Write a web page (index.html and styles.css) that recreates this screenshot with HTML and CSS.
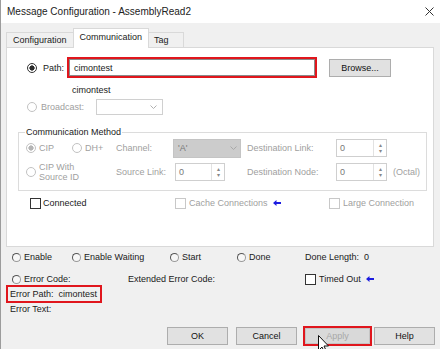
FILE: index.html
```html
<!DOCTYPE html>
<html>
<head>
  <title>Message Configuration - AssemblyRead2</title>
  <link rel="stylesheet" href="styles.css">
</head>
<body>
  <div class="dialog">
    <div class="titlebar">
      <span class="title">Message Configuration - AssemblyRead2</span>
      <svg class="close" width="9" height="9" viewBox="0 0 9 9"><path d="M0.5 0.5 L8.5 8.5 M8.5 0.5 L0.5 8.5" stroke="#333" stroke-width="1"/></svg>
    </div>

    <div class="tabs">
      <div class="tab">Configuration</div>
      <div class="tab active">Communication</div>
      <div class="tab">Tag</div>
    </div>

    <div class="panel">
      <div class="path-row">
        <span class="radio checked"></span>
        <label class="path-label">Path:</label>
        <div class="mark path-mark">
          <div class="textbox">cimontest</div>
        </div>
        <button class="btn browse">Browse...</button>
      </div>
      <div class="path-echo">cimontest</div>
      <div class="broadcast-row">
        <span class="radio off"></span>
        <label class="muted bc-label">Broadcast:</label>
        <div class="select">
          <svg class="chev" width="7" height="4" viewBox="0 0 7 4"><path d="M0.5 0.5 L3.5 3.5 L6.5 0.5" fill="none" stroke="#b0b0b0"/></svg>
        </div>
      </div>

      <fieldset class="group">
        <legend>Communication Method</legend>
        <div class="method-grid">
          <div class="choices">
            <span class="choice first"><span class="radio off picked"></span><span class="muted">CIP</span></span>
            <span class="choice"><span class="radio off"></span><span class="muted">DH+</span></span>
          </div>
          <div class="muted">Channel:</div>
          <div class="combo">
            <span>'A'</span>
            <svg class="chev" width="7" height="4" viewBox="0 0 7 4"><path d="M0.5 0.5 L3.5 3.5 L6.5 0.5" fill="none" stroke="#a8a8a8"/></svg>
          </div>
          <div class="muted lab2">Destination Link:</div>
          <div class="spin"><span class="val">0</span><span class="arrows">&#9652;<br>&#9662;</span></div>
          <div></div>

          <div class="choices">
            <span class="choice"><span class="radio off"></span><span class="muted two-line">CIP With<br>Source ID</span></span>
          </div>
          <div class="muted">Source Link:</div>
          <div class="spin short"><span class="val">0</span><span class="arrows">&#9652;<br>&#9662;</span></div>
          <div class="muted lab2">Destination Node:</div>
          <div class="spin"><span class="val">0</span><span class="arrows">&#9652;<br>&#9662;</span></div>
          <div class="muted octal">(Octal)</div>
        </div>
      </fieldset>

      <div class="check-row">
        <span class="check-item"><span class="box"></span>Connected</span>
        <span class="check-item">
          <span class="box off"></span><span class="muted">Cache Connections</span>
          <svg class="arrow cache-arrow" width="8" height="6" viewBox="0 0 8 6"><path d="M0 3 L3.5 0 L3.5 2 L8 2 L8 4 L3.5 4 L3.5 6 Z" fill="#1c1ce0"/></svg>
        </span>
        <span class="check-item"><span class="box off"></span><span class="muted">Large Connection</span></span>
      </div>
    </div>

    <div class="status">
      <div class="status-row">
        <span class="flag"><span class="led"></span>Enable</span>
        <span class="flag"><span class="led"></span>Enable Waiting</span>
        <span class="flag"><span class="led"></span>Start</span>
        <span class="flag"><span class="led"></span>Done</span>
        <span>Done Length:&nbsp; 0</span>
      </div>
      <div class="error-row">
        <span class="flag"><span class="led"></span>Error Code:</span>
        <span>Extended Error Code:</span>
        <span class="flag"><span class="box"></span>Timed Out
          <svg class="arrow" width="8" height="6" viewBox="0 0 8 6"><path d="M0 3 L3.5 0 L3.5 2 L8 2 L8 4 L3.5 4 L3.5 6 Z" fill="#1c1ce0"/></svg>
        </span>
      </div>
      <div class="mark error-path">Error Path:&nbsp; cimontest</div>
      <div class="error-text">Error Text:</div>
    </div>

    <div class="buttons">
      <button class="btn">OK</button>
      <button class="btn cancel">Cancel</button>
      <div class="mark apply-mark"><button class="btn apply" disabled>Apply</button></div>
      <button class="btn help">Help</button>
    </div>

    <svg class="cursor" width="12" height="19" viewBox="0 0 12 19"><path d="M0.5 0.5 L0.5 15.5 L4 12 L6.5 17.5 L8.5 16.5 L6 11 L10.5 11 Z" fill="#fff" stroke="#111" stroke-width="1"/></svg>
  </div>
</body>
</html>
```

FILE: styles.css
```css
body {
  margin: 0;
  background: #f0f0f0;
  font-family: "Liberation Sans", Arial, sans-serif;
  font-size: 9px;
  color: #1a1a1a;
}
.dialog {
  position: relative;
  width: 440px;
  height: 349px;
  box-sizing: border-box;
  border-left: 1px solid #9c9c9c;
  overflow: hidden;
}
.titlebar {
  height: 23px;
  background: #fff;
  display: flex;
  align-items: center;
  justify-content: space-between;
  padding: 0 6px 0 6px;
}
.title {
  font-size: 10px;
  color: #222;
}
.close {
  margin-top: -1px;
}

/* tabs */
.tabs {
  display: flex;
  align-items: flex-end;
  height: 19px;
  padding: 5px 0 0 5px;
}
.tab {
  height: 15px;
  line-height: 14px;
  box-sizing: border-box;
  padding: 0 6px;
  border: 1px solid #d9d9d9;
  border-bottom: none;
  background: #f0f0f0;
  margin-left: -1px;
}
.tab:first-child {
  margin-left: 0;
}
.tab.active {
  position: relative;
  z-index: 1;
  height: 20px;
  line-height: 16px;
  margin-bottom: -1px;
  background: #fff;
}
.tab:last-child {
  padding: 0 14px 0 5px;
}

.panel {
  width: 428px;
  height: 200px;
  box-sizing: border-box;
  margin-left: 5px;
  padding-top: 9px;
  background: #fff;
  border: 1px solid #d9d9d9;
}

/* radios and checkboxes */
.radio {
  display: inline-block;
  width: 10px;
  height: 10px;
  box-sizing: border-box;
  border-radius: 50%;
  border: 1px solid #333;
  background: #fff;
  flex: none;
}
.radio.checked {
  background: radial-gradient(circle, #2a2a2a 0 2.4px, #fff 2.8px);
}
.radio.off {
  border-color: #c2c2c2;
}
.radio.picked {
  background: radial-gradient(circle, #b5b5b5 0 2.4px, #fff 2.8px);
}
.box {
  display: inline-block;
  width: 11px;
  height: 11px;
  box-sizing: border-box;
  border: 1px solid #333;
  background: #fff;
  margin-right: 2px;
  flex: none;
}
.box.off {
  border-color: #c8c8c8;
}
.led {
  display: inline-block;
  width: 9px;
  height: 9px;
  box-sizing: border-box;
  border-radius: 50%;
  border: 1px solid #555;
  border-right-color: #9a9a9a;
  border-bottom-color: #9a9a9a;
  background: #f7f7f7;
  margin-right: 3px;
  flex: none;
}
.muted {
  color: #a0a0a0;
}

.mark {
  border: 2px solid #e0161d;
  box-sizing: border-box;
}

/* path */
.path-row {
  display: flex;
  align-items: center;
  height: 21px;
  padding-left: 20px;
}
.path-label {
  width: 24px;
  margin-left: 6px;
}
.path-mark {
  width: 250px;
  height: 21px;
}
.textbox {
  height: 17px;
  line-height: 16px;
  box-sizing: border-box;
  border: 1px solid #8a8a8a;
  padding-left: 4px;
  background: #fff;
}
.btn {
  font: inherit;
  color: #111;
  width: 61px;
  height: 18px;
  padding: 0;
  background: #e1e1e1;
  border: 1px solid #adadad;
}
.browse {
  width: 62px;
  margin-left: 12px;
}
.path-echo {
  margin-top: 6px;
  line-height: 12px;
  padding-left: 65px;
}
.broadcast-row {
  display: flex;
  align-items: center;
  height: 17px;
  margin-top: 2px;
  padding-left: 20px;
}
.bc-label {
  width: 55px;
  margin-left: 4px;
}
.select {
  width: 67px;
  height: 16px;
  box-sizing: border-box;
  border: 1px solid #d0d0d0;
  display: flex;
  align-items: center;
  justify-content: flex-end;
  padding-right: 5px;
}

/* communication method */
.group {
  margin: 12px 6px 0 11px;
  padding: 0 0 5px 7px;
  border: 1px solid #dcdcdc;
  min-width: 0;
}
.group legend {
  padding: 0 1px;
  margin-left: -1px;
  line-height: 11px;
}
.method-grid {
  display: grid;
  grid-template-columns: 90px 57px 68px 95px 51px auto;
  grid-template-rows: 20px 27px;
  align-items: center;
}
.choices {
  display: flex;
  align-items: center;
}
.choice {
  display: flex;
  align-items: center;
  gap: 3px;
}
.choice.first {
  width: 46px;
}
.two-line {
  line-height: 10px;
}
.combo {
  height: 19px;
  box-sizing: border-box;
  background: #cccccc;
  border: 1px solid #c4c4c4;
  color: #777;
  display: flex;
  align-items: center;
  justify-content: space-between;
  padding: 0 3px 0 4px;
}
.lab2 {
  padding-left: 6px;
}
.spin {
  height: 18px;
  box-sizing: border-box;
  border: 1px solid #cfcfcf;
  display: flex;
  align-items: stretch;
  justify-content: space-between;
  color: #777;
}
.spin.short {
  width: 50px;
  margin-left: 2px;
}
.spin .val {
  line-height: 16px;
  padding-left: 3px;
}
.spin .arrows {
  width: 13px;
  border-left: 1px solid #e2e2e2;
  font-size: 6px;
  line-height: 6px;
  text-align: center;
  color: #888;
  padding-top: 2px;
  box-sizing: border-box;
}
.octal {
  padding-left: 6px;
}

.check-row {
  display: grid;
  grid-template-columns: 145px 154px auto;
  align-items: center;
  height: 12px;
  margin-top: 6px;
  padding-left: 23px;
}
.check-item {
  display: flex;
  align-items: center;
}
.check-item .box.off {
  margin-right: 3px;
}
.cache-arrow {
  margin-left: 18px;
}

/* status */
.status {
  padding-top: 4px;
}
.status-row {
  display: grid;
  grid-template-columns: 60px 98px 67px 68px auto;
  align-items: center;
  height: 12px;
  padding-left: 11px;
}
.flag {
  display: flex;
  align-items: center;
}
.error-row {
  display: grid;
  grid-template-columns: 116px 177px auto;
  align-items: center;
  height: 14px;
  margin-top: 9px;
  padding-left: 11px;
}
.error-row .box {
  margin-right: 3px;
}
.arrow {
  margin-left: 5px;
}
.error-path {
  width: 96px;
  height: 18px;
  line-height: 14px;
  margin: -1px 0 0 5px;
  padding-left: 2px;
}
.error-text {
  line-height: 12px;
  padding-left: 9px;
}

/* buttons */
.buttons {
  display: flex;
  align-items: center;
  justify-content: flex-end;
  height: 20px;
  margin-top: 11px;
  padding-right: 5px;
}
.cancel {
  margin-left: 8px;
}
.apply-mark {
  width: 69px;
  height: 20px;
  margin-left: 6px;
  display: flex;
}
.apply {
  width: 100%;
  height: 100%;
  background: #d9d9d9;
  border-color: #c4c4c4;
  color: #a8a8a8;
}
.help {
  margin-left: 2px;
}

.cursor {
  position: absolute;
  left: 317px;
  top: 335px;
}
```
